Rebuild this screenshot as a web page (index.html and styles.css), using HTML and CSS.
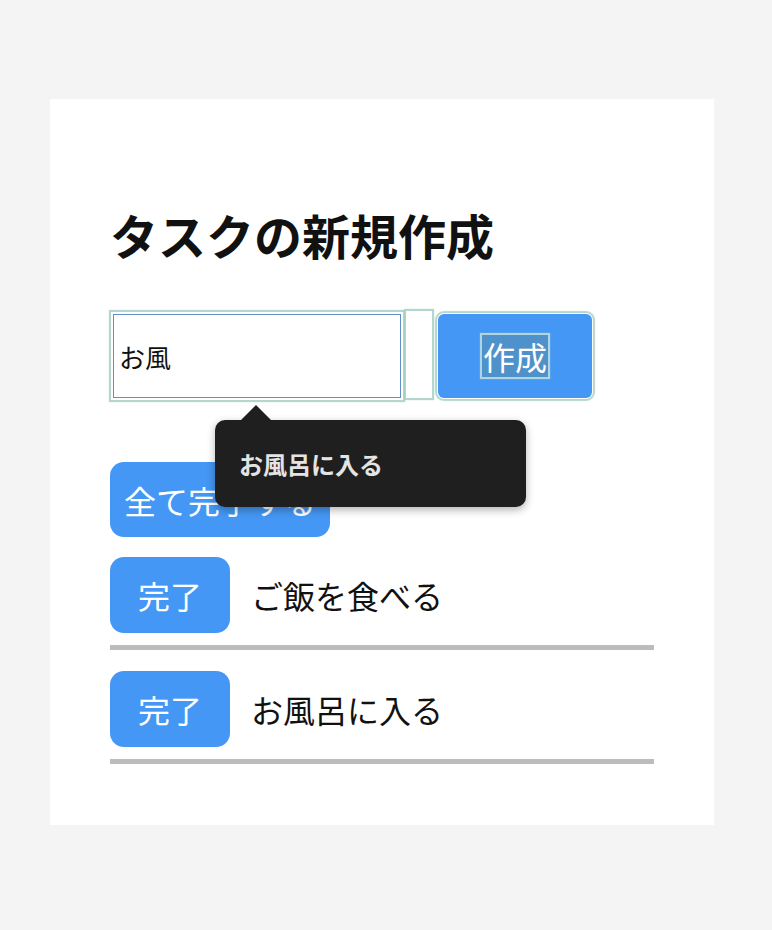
FILE: index.html
```html
<!DOCTYPE html>
<html lang="ja">
<head>
    <meta charset="UTF-8">
    <meta name="viewport" content="width=device-width, initial-scale=1.0">
    <title>タスクの新規作成</title>
    <link rel="stylesheet" href="styles.css">
</head>
<body>
    <div class="card">
        <h1>タスクの新規作成</h1>

        <div class="form-wrap">
            <form class="new-task" onsubmit="return false;">
                <input class="task-input" type="text" value="お風">
                <span class="spacer"></span>
                <button class="btn create-btn"><span class="sel">作成</span></button>
            </form>
            <div class="tooltip">お風呂に入る</div>
        </div>

        <button class="btn all-done">全て完了する</button>

        <div class="task">
            <button class="btn done-btn">完了</button>
            <span class="task-name">ご飯を食べる</span>
        </div>
        <div class="task">
            <button class="btn done-btn">完了</button>
            <span class="task-name">お風呂に入る</span>
        </div>
    </div>
</body>
</html>
```

FILE: styles.css
```css
body {
    font-family: "Noto Sans CJK JP", "Noto Sans", sans-serif;
    background-color: #f4f4f4;
    color: #111;
    margin: 0;
    padding: 0;
}
.card {
    width: 544px;
    margin: 99px 0 0 50px;
    padding: 60px 60px 61px;
    background-color: #ffffff;
}
h1 {
    font-size: 48px;
    line-height: 58px;
    font-weight: 700;
    margin: 46px 0 0 0;
}
.form-wrap {
    position: relative;
    margin-top: 51px;
}
.new-task {
    display: flex;
    align-items: stretch;
    height: 84px;
}
.task-input {
    width: 288px;
    box-sizing: border-box;
    margin: 0 0 0 3px;
    padding: 0 5px;
    font-family: inherit;
    font-size: 26px;
    color: #111;
    border: 1px solid #5f8fc4;
    outline: none;
    box-shadow: 0 0 0 2px #ffffff, 0 0 1px 4px rgba(160, 205, 195, 0.8);
}
.spacer {
    width: 26px;
    margin: -3px 0 0 5px;
    box-shadow: 0 0 1px 2px rgba(160, 205, 195, 0.8);
}
.btn {
    background-color: #4497f4;
    border: none;
    color: #ffffff;
    font-family: inherit;
    font-size: 32px;
    cursor: pointer;
    padding: 0;
}
.create-btn {
    width: 154px;
    margin-left: 6px;
    border-radius: 6px;
    box-shadow: 0 0 0 1px #ffffff, 0 0 1px 3px rgba(160, 205, 195, 0.8);
}
.sel {
    display: inline-block;
    padding: 0 1px;
    line-height: 42px;
    background-color: rgba(90, 140, 170, 0.55);
    box-shadow: 0 0 1px 2px rgba(200, 230, 220, 0.8);
}
.tooltip {
    position: absolute;
    left: 105px;
    top: 106px;
    width: 287px;
    height: 87px;
    padding-left: 24px;
    display: flex;
    align-items: center;
    background-color: #1f1f1f;
    color: #e4e4e4;
    font-size: 24px;
    font-weight: 700;
    border-radius: 10px;
    box-shadow: 0 3px 8px rgba(0, 0, 0, 0.3);
    z-index: 2;
}
.tooltip::before {
    content: "";
    position: absolute;
    left: 25px;
    top: -15px;
    border-left: 16px solid transparent;
    border-right: 16px solid transparent;
    border-bottom: 16px solid #1f1f1f;
}
.all-done {
    display: block;
    width: 220px;
    height: 75px;
    margin-top: 64px;
    border-radius: 14px;
}
.task {
    display: flex;
    align-items: baseline;
    margin-top: 20px;
    padding-bottom: 12px;
    border-bottom: 5px solid #bcbcbc;
}
.task + .task {
    margin-top: 21px;
}
.done-btn {
    width: 120px;
    height: 76px;
    border-radius: 14px;
}
.task-name {
    margin-left: 21px;
    font-size: 32px;
}
```
